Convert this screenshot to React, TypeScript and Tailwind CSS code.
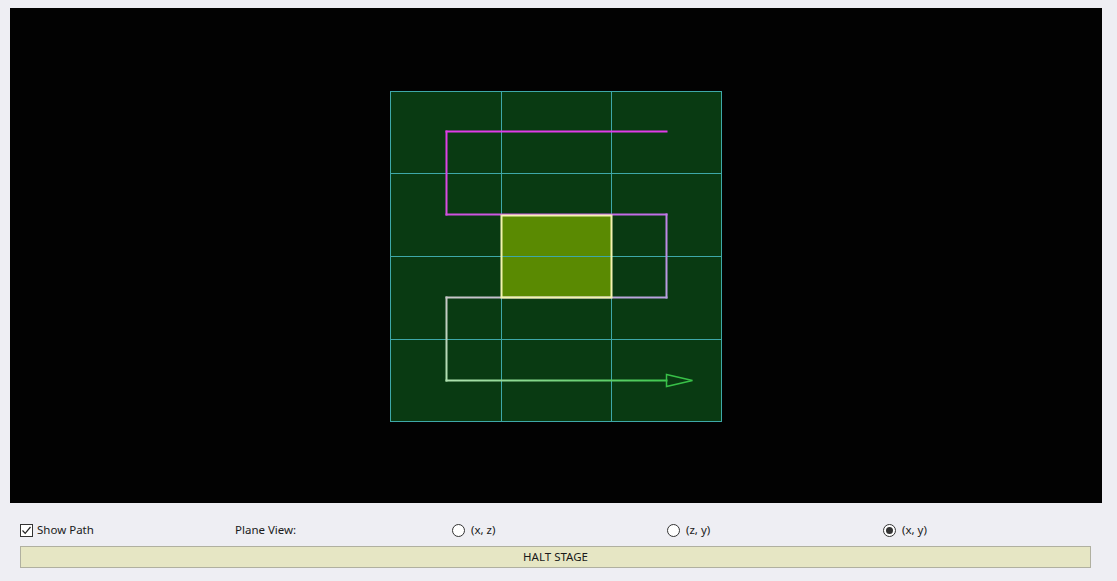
import { useState } from 'react';

type Plane = 'xz' | 'zy' | 'xy';

const GRID_X = [0, 111, 221, 331];
const GRID_Y = [0, 82, 165, 248, 330];

// path segments, each with its own start/end colour
const SEGMENTS = [
  { x1: 276, y1: 40, x2: 56, y2: 40, c1: '#e03ce8', c2: '#e03ce8' },
  { x1: 56, y1: 40, x2: 56, y2: 123, c1: '#e03ce8', c2: '#d850e0' },
  { x1: 56, y1: 123, x2: 276, y2: 123, c1: '#d050e0', c2: '#c070e8' },
  { x1: 276, y1: 123, x2: 276, y2: 206, c1: '#c080e8', c2: '#b8a0e0' },
  { x1: 276, y1: 206, x2: 56, y2: 206, c1: '#b8a0e0', c2: '#c8c8c8' },
  { x1: 56, y1: 206, x2: 56, y2: 289, c1: '#c8c8c8', c2: '#b0e0b0' },
  { x1: 56, y1: 289, x2: 276, y2: 289, c1: '#b0e0b0', c2: '#40c850' },
];

function Stage({ showPath }: { showPath: boolean }) {
  return (
    <svg width="332" height="331" viewBox="0 0 332 331" className="block">
      <defs>
        {SEGMENTS.map((s, i) => (
          <linearGradient
            key={i}
            id={`seg${i}`}
            gradientUnits="userSpaceOnUse"
            x1={s.x1}
            y1={s.y1}
            x2={s.x2}
            y2={s.y2}
          >
            <stop offset="0" stopColor={s.c1} />
            <stop offset="1" stopColor={s.c2} />
          </linearGradient>
        ))}
      </defs>

      <rect x="0" y="0" width="331" height="330" fill="#093a12" />
      <rect x="111" y="124" width="110" height="82" fill="#5a8a02" />

      <g shapeRendering="crispEdges" stroke="#3ea8a8" strokeWidth="1">
        {GRID_X.map((x) => (
          <line key={`x${x}`} x1={x + 0.5} y1="0" x2={x + 0.5} y2="331" />
        ))}
        {GRID_Y.map((y) => (
          <line key={`y${y}`} x1="0" y1={y + 0.5} x2="332" y2={y + 0.5} />
        ))}
      </g>

      {showPath &&
        SEGMENTS.map((s, i) => (
          <line
            key={i}
            x1={s.x1 + 0.5}
            y1={s.y1 + 0.5}
            x2={s.x2 + 0.5}
            y2={s.y2 + 0.5}
            stroke={`url(#seg${i})`}
            strokeWidth="2"
            strokeLinecap="square"
          />
        ))}

      <rect x="111.5" y="124.5" width="110" height="82" fill="none" stroke="#f4f4b0" strokeWidth="2" />

      {showPath && (
        <polygon points="276.5,283.5 302.5,289.5 276.5,295.5" fill="none" stroke="#38c048" strokeWidth="1.5" />
      )}
    </svg>
  );
}

function Radio({ checked, label, onClick }: { checked: boolean; label: string; onClick: () => void }) {
  return (
    <button onClick={onClick} className="flex items-center gap-[6px] text-[11.5px] text-[#1a1a1a]">
      <span className="w-[13px] h-[13px] rounded-full border border-[#333] bg-white flex items-center justify-center">
        {checked && <span className="w-[7px] h-[7px] rounded-full bg-[#333]" />}
      </span>
      <span>{label}</span>
    </button>
  );
}

export default function App() {
  const [showPath, setShowPath] = useState(true);
  const [plane, setPlane] = useState<Plane>('xy');

  return (
    <div
      className="w-[1117px] h-[581px] bg-[#eeeef3] pt-[8px] overflow-hidden"
      style={{ fontFamily: '"Noto Sans", "Open Sans", Arial, sans-serif' }}
    >
      {/* Stage view */}
      <div className="ml-[10px] w-[1092px] h-[495px] bg-[#020202] flex justify-center items-start pt-[83px]">
        <Stage showPath={showPath} />
      </div>

      {/* Controls */}
      <div className="flex items-center h-[18px] mt-[18px] pl-[20px] text-[11.5px] text-[#1a1a1a]">
        <div className="w-[215px]">
          <button onClick={() => setShowPath(!showPath)} className="flex items-center gap-[4px]">
            <span className="w-[13px] h-[13px] border border-[#333] bg-white flex items-center justify-center">
              {showPath && (
                <svg width="11" height="11" viewBox="0 0 11 11">
                  <path d="M1.5 5.5 L4.2 8.3 L9.5 2" fill="none" stroke="#222" strokeWidth="1.2" />
                </svg>
              )}
            </span>
            <span>Show Path</span>
          </button>
        </div>
        <div className="w-[217px]">Plane View:</div>
        <div className="w-[215px]">
          <Radio checked={plane === 'xz'} label="(x, z)" onClick={() => setPlane('xz')} />
        </div>
        <div className="w-[216px]">
          <Radio checked={plane === 'zy'} label="(z, y)" onClick={() => setPlane('zy')} />
        </div>
        <div>
          <Radio checked={plane === 'xy'} label="(x, y)" onClick={() => setPlane('xy')} />
        </div>
      </div>

      <button className="ml-[20px] mt-[7px] w-[1071px] h-[22px] bg-[#e6e6c4] border border-[#b0b0a0] text-[11.5px] text-[#1a1a1a] flex items-center justify-center">
        HALT STAGE
      </button>
    </div>
  );
}
